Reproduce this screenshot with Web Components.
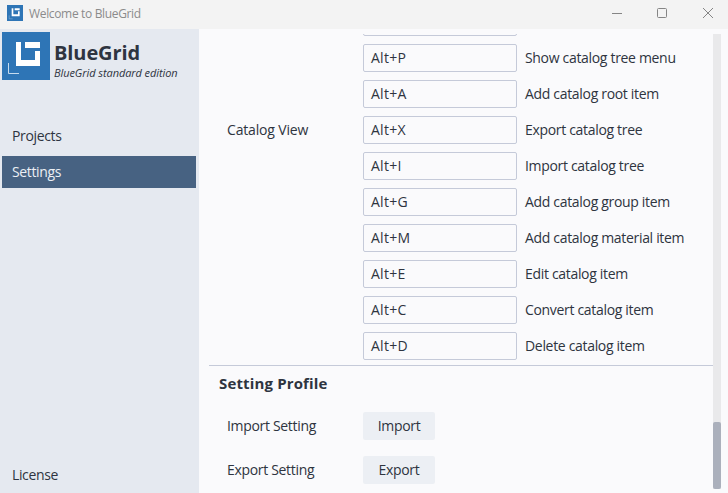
<!DOCTYPE html>
<html lang="en"><head><meta charset="utf-8"><title>Welcome to BlueGrid</title>
<style>html,body{margin:0;width:728px;height:493px;overflow:hidden}body{font:14px/20px "Open Sans","Noto Sans",sans-serif;letter-spacing:-.32px;color:#2e3440;background:#fafafc}</style></head>
<body><app-window></app-window>
<script>
const define=(name,html)=>{
  const t=document.createElement('template');t.innerHTML=html;
  customElements.define(name,class extends HTMLElement{constructor(){super();this.attachShadow({mode:'open'}).append(t.content.cloneNode(true));}});
};
define('brand-mark',`<style>:host{display:block;flex:none}svg{display:block;width:100%;height:100%}</style>
<svg viewBox="0 0 48 48"><path fill="#2e75b6" d="M0 0h48v48H0z"/><path fill="#fff" d="M14 10h5v18h14v-9h5v15H14zM23 10h15v6H23z"/><path fill="none" stroke="#c6dbee" d="M6.5 31v10.5H17"/></svg>`);
define('title-bar',`<style>:host{display:flex;align-items:center;height:29px;background:#f3f3f3;color:#8b8b8b;font-size:12px;line-height:18px;letter-spacing:-.34px;box-sizing:border-box;padding-left:7px;padding-bottom:3px}
brand-mark{width:16px;height:16px;margin-right:6px}span{flex:1;padding-top:2px}svg{display:block;width:136px;height:26px}</style>
<brand-mark></brand-mark><span><slot></slot></span><svg viewBox="0 0 136 26" fill="none" stroke="#858585"><path d="M20 13.5h10"/><rect x="65.5" y="8.5" width="9" height="9" rx="1"/><path d="M111 8l10 10M121 8l-10 10"/></svg>`);
define('nav-item',`<style>:host{display:flex;align-items:center;height:32px;box-sizing:border-box;margin:0 3px 0 2px;padding:0 10px;letter-spacing:-.36px}:host([selected]){background:#476282;color:#eceff4}</style><slot></slot>`);
define('side-bar',`<style>:host{display:flex;flex-direction:column;width:199px;flex:none;background:#e5e9f0;box-sizing:border-box;padding-top:3px;padding-bottom:2px}
header{display:flex;height:48px;padding-left:2px;gap:4px;margin-bottom:40px}brand-mark{width:48px;height:48px}h1{font-size:20px;line-height:24px;margin:9px 0 0;letter-spacing:-.1px}p{font-size:11px;line-height:16px;margin:0;font-style:italic;letter-spacing:-.08px;white-space:nowrap}nav{display:flex;flex-direction:column;gap:4px}.end{margin-top:auto}</style>
<header><brand-mark></brand-mark><div><h1>BlueGrid</h1><p>BlueGrid standard edition</p></div></header>
<nav><nav-item>Projects</nav-item><nav-item selected>Settings</nav-item></nav><nav-item class="end">License</nav-item>`);
define('key-field',`<style>:host{display:flex;align-items:center;box-sizing:border-box;width:154px;height:28px;border:1px solid #c5cad9;border-radius:2px;padding:0 7px;letter-spacing:.25px}</style><slot></slot>`);
define('shortcut-row',`<style>:host{display:grid;grid-template-columns:136px 154px 1fr;align-items:center;height:28px;padding-left:28px;white-space:nowrap}.d{padding-left:8px}.g{letter-spacing:-.16px}</style>
<span class="g"><slot name="group"></slot></span><key-field><slot name="key"></slot></key-field><span class="d"><slot></slot></span>`);
define('push-button',`<style>:host{display:flex;align-items:center;justify-content:center;width:72px;height:28px;background:#eceff4;border-radius:2px}</style><slot></slot>`);
define('profile-row',`<style>:host{display:grid;grid-template-columns:136px 72px;align-items:center;height:28px;padding-left:28px}</style><span><slot></slot></span><push-button><slot name="action"></slot></push-button>`);
define('scroll-bar',`<style>:host{display:flex;flex-direction:column;justify-content:flex-end;width:8px;margin:5px 7px 4px 0;background:#e9e9eb}i{height:67px;background:#abb0bc;border-radius:2px}</style><i></i>`);
define('settings-view',`<style>:host{display:flex;flex:1;min-width:0}main{flex:1;margin-top:5px;overflow:hidden}.list{display:flex;flex-direction:column;gap:8px;margin-top:-26px}section{border-top:1px solid #c5cad9;margin:5px 0 0 10px}h2{font-size:15px;line-height:20px;letter-spacing:.15px;margin:0 0 19px;padding:7px 10px 0}profile-row{margin-left:-10px;margin-bottom:16px}</style>
<main><div class="list"></div><section><h2>Setting Profile</h2><profile-row>Import Setting<span slot="action">Import</span></profile-row><profile-row>Export Setting<span slot="action">Export</span></profile-row></section></main><scroll-bar></scroll-bar>`);
class AppWindow extends HTMLElement{
  constructor(){
    super();
    this.attachShadow({mode:'open'}).innerHTML='<style>:host{display:flex;flex-direction:column;height:493px;background:#fafafc}.body{display:flex;flex:1;min-height:0}</style><title-bar>Welcome to BlueGrid</title-bar><div class="body"><side-bar></side-bar><settings-view></settings-view></div>';
    const list=this.shadowRoot.querySelector('settings-view').shadowRoot.querySelector('.list');
    const rows=[['',''],['P','Show catalog tree menu'],['A','Add catalog root item'],['X','Export catalog tree'],['I','Import catalog tree'],['G','Add catalog group item'],['M','Add catalog material item'],['E','Edit catalog item'],['C','Convert catalog item'],['D','Delete catalog item']];
    for(const [key,text] of rows){
      const r=document.createElement('shortcut-row');
      if(key){r.innerHTML=(key==='X'?'<span slot="group">Catalog View</span>':'')+`<span slot="key">Alt+${key}</span>${text}`;}
      list.append(r);
    }
  }
}
customElements.define('app-window',AppWindow);
</script></body></html>
